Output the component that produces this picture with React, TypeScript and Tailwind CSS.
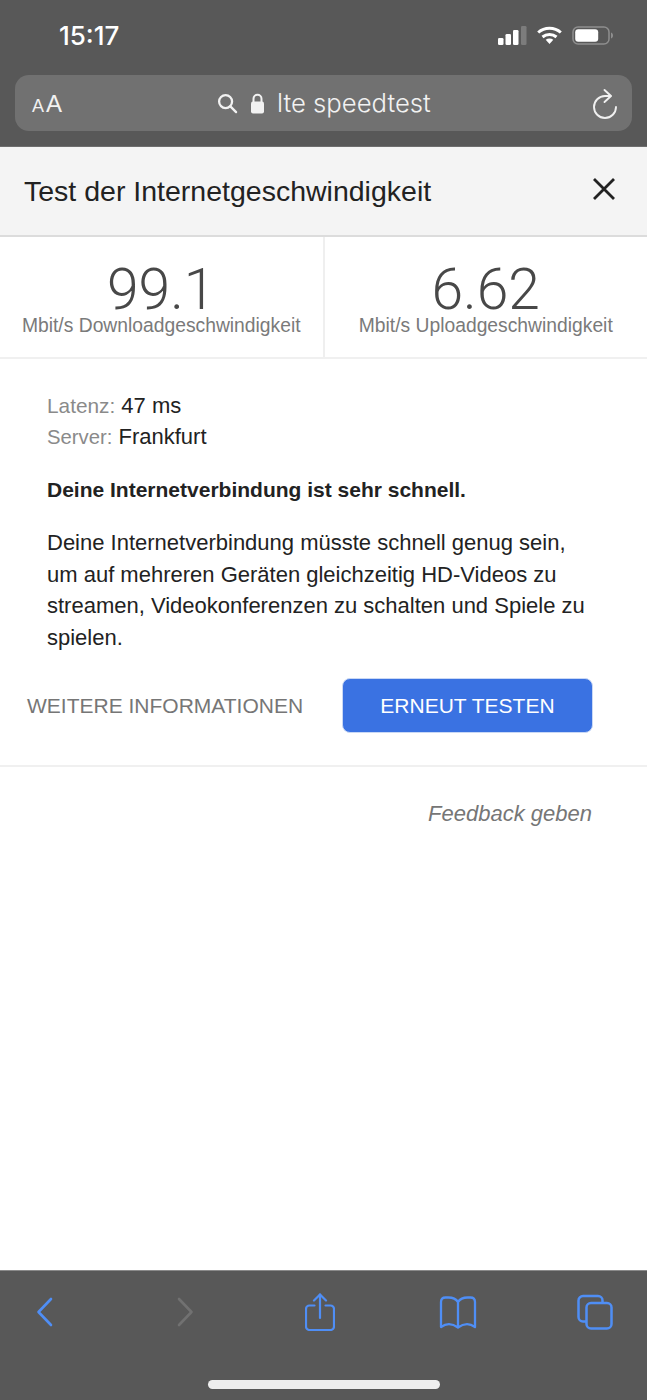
const blue = "#4f8ef5";

function Signal() {
  return (
    <svg width="29" height="19" viewBox="0 0 29 19">
      <rect x="0" y="12" width="5.500" height="7" rx="1.300" fill="#fff" />
      <rect x="7.500" y="8" width="5.500" height="11" rx="1.300" fill="#fff" />
      <rect x="15" y="4" width="5.500" height="15" rx="1.300" fill="#fff" />
      <rect x="23" y="0" width="5.500" height="19" rx="1.300" fill="#7c7c7c" />
    </svg>
  );
}

function Wifi() {
  return (
    <svg width="25" height="18" viewBox="0 0 25 18" fill="none" stroke="#fff" strokeWidth="3">
      <path d="M1.200 6.500C7.500 .8 17.500 .8 23.800 6.500" />
      <path d="M5.500 11c4-3.400 10-3.400 14 0" />
      <path d="M12.500 18l-3.800-4.200c2.200-1.700 5.400-1.700 7.600 0z" fill="#fff" stroke="none" />
    </svg>
  );
}

function Battery() {
  return (
    <svg width="42" height="19" viewBox="0 0 42 19">
      <rect x="1" y="1" width="36" height="17" rx="5" fill="none" stroke="#8e8e8e" strokeWidth="1.500" />
      <rect x="3.200" y="3.200" width="23" height="12.600" rx="3" fill="#fff" />
      <path d="M39 6.500c1.500.5 2 1.700 2 3s-.5 2.500-2 3z" fill="#8e8e8e" />
    </svg>
  );
}

function Search() {
  return (
    <svg width="21" height="21" viewBox="0 0 22 22" fill="none" stroke="#f2f2f2" strokeWidth="2.400" strokeLinecap="round">
      <circle cx="9" cy="9" r="6.800" />
      <path d="M14 14l6 6" />
    </svg>
  );
}

function Lock() {
  return (
    <svg width="15" height="21" viewBox="0 0 15 21">
      <path d="M3.500 9V5.800a4 4 0 0 1 8 0V9" fill="none" stroke="#f2f2f2" strokeWidth="2" />
      <rect x="1" y="8.500" width="13" height="12" rx="2" fill="#f2f2f2" />
    </svg>
  );
}

function Reload() {
  return (
    <svg width="26" height="35" viewBox="0 0 26 35" fill="none" stroke="#f0f0f0" strokeWidth="1.900" strokeLinecap="round" strokeLinejoin="round">
      <path d="M18.500 10H13A11 11 0 1 0 24 21" />
      <path d="M12.500 4l6.500 6-6.500 6" />
    </svg>
  );
}

function Back({ color }: { color: string }) {
  return (
    <svg width="18" height="30" viewBox="0 0 18 30" fill="none" stroke={color} strokeWidth="2.600" strokeLinecap="round" strokeLinejoin="round">
      <path d="M15 2L2.500 15 15 28" />
    </svg>
  );
}

function Forward({ color }: { color: string }) {
  return (
    <svg width="18" height="30" viewBox="0 0 18 30" fill="none" stroke={color} strokeWidth="2.600" strokeLinecap="round" strokeLinejoin="round">
      <path d="M3 2l12.500 13L3 28" />
    </svg>
  );
}

function Share() {
  return (
    <svg width="30" height="38" viewBox="0 0 30 38" fill="none" stroke={blue} strokeWidth="2.200" strokeLinecap="round" strokeLinejoin="round">
      <path d="M9.500 12.500H4.500a3.500 3.500 0 0 0-3.500 3.500V33.500a3.500 3.500 0 0 0 3.500 3.500h21a3.500 3.500 0 0 0 3.500-3.500V16a3.500 3.500 0 0 0-3.500-3.500h-5" />
      <path d="M15 25V1.500" />
      <path d="M9 7.500l6-6 6 6" />
    </svg>
  );
}

function Book() {
  return (
    <svg width="38" height="33" viewBox="0 0 38 33" fill="none" stroke={blue} strokeWidth="2.300" strokeLinecap="round" strokeLinejoin="round">
      <path d="M19 6C17 3 13 1.500 9.500 1.500H6.500C3.500 1.500 2 3 2 6V31C7.500 27 13.500 27.500 19 31.500 24.500 27.500 30.500 27 36 31V6c0-3-1.500-4.500-4.500-4.500h-3C25 1.500 21 3 19 6zM19 6V30" />
    </svg>
  );
}

function Tabs() {
  return (
    <svg width="36" height="36" viewBox="0 0 36 36" fill="none" stroke={blue} strokeWidth="2.500">
      <path d="M9 27.500H6a4.500 4.500 0 0 1-4.500-4.500V6.500A4.500 4.500 0 0 1 6 2h15a4.500 4.500 0 0 1 4.500 4.500V9" />
      <rect x="9.500" y="9" width="25" height="25.500" rx="4.500" />
    </svg>
  );
}

function Stat({ value, label, border }: { value: string; label: string; border?: boolean }) {
  return (
    <div className={`flex-1 flex flex-col items-center pt-[25px] ${border ? "border-r-2 border-[#efefef]" : ""}`}>
      <div className="font-['Roboto',sans-serif] font-light text-[57px] leading-[55px] text-[#484848]">{value}</div>
      <div className="text-[19.300px] leading-[18px] text-[#7a7a7a]">{label}</div>
    </div>
  );
}

export default function App() {
  return (
    <div className="w-[647px] h-[1400px] flex flex-col bg-white overflow-hidden font-['Liberation_Sans',Arial,sans-serif]">
      <div className="h-[147px] shrink-0 bg-[#585858] flex flex-col border-b border-[#6e6e6e]">
        <div className="h-[75px] flex items-center justify-between pl-[59px] pr-[33px] pb-[5px]">
          <span className="font-['Inter',sans-serif] text-[26px] font-medium text-white">15:17</span>
          <div className="flex items-center gap-[10px]">
            <Signal />
            <Wifi />
            <Battery />
          </div>
        </div>
        <div className="mx-[15px] h-[56px] rounded-[14px] bg-[#717171] flex items-center pl-[17px] pr-[14px] text-[#f2f2f2]">
          <div className="flex items-baseline gap-[2px] w-[185px] pt-[2px]">
            <span className="text-[18px]">A</span>
            <span className="text-[24px]">A</span>
          </div>
          <Search />
          <span className="ml-[12px]"><Lock /></span>
          <span className="ml-[12px] pt-[1px] text-[25.700px] font-['Inter',sans-serif] font-light flex-1">lte speedtest</span>
          <Reload />
        </div>
      </div>

      <div className="h-[88px] shrink-0 bg-[#f4f4f4] flex items-center justify-between pl-[24px] pr-[31px]">
        <h1 className="text-[28.500px] text-[#222]">Test der Internetgeschwindigkeit</h1>
        <svg width="24" height="24" viewBox="0 0 24 24" stroke="#222" strokeWidth="2.800" className="mb-[4px]">
          <path d="M2 2l20 20M22 2L2 22" />
        </svg>
      </div>

      <div className="h-[124px] shrink-0 flex border-t-2 border-b-2 border-t-[#dcdcdc] border-b-[#f0f0f0]">
        <Stat value="99.1" label="Mbit/s Downloadgeschwindigkeit" border />
        <Stat value="6.62" label="Mbit/s Uploadgeschwindigkeit" />
      </div>

      <div className="pl-[47px] pr-[50px] pt-[31px]">
        <div className="text-[22px] leading-[31px] text-[#222]">
          <div><span className="text-[#8a8a8a] text-[20.800px]">Latenz:</span> 47 ms</div>
          <div><span className="text-[#8a8a8a] text-[20.300px]">Server:</span> Frankfurt</div>
        </div>
        <p className="mt-[21px] text-[21px] leading-[31px] font-bold text-[#222]">Deine Internetverbindung ist sehr schnell.</p>
        <p className="mt-[22px] text-[22px] leading-[31.500px] text-[#222]">
          Deine Internetverbindung müsste schnell genug sein, um auf mehreren Geräten gleichzeitig HD-Videos zu streamen, Videokonferenzen zu schalten und Spiele zu spielen.
        </p>
      </div>

      <div className="flex items-center pl-[27px] mt-[25px]">
        <span className="text-[21px] text-[#767676] w-[315px]">WEITERE INFORMATIONEN</span>
        <button className="w-[251px] h-[55px] rounded-[8px] bg-[#3a72e2] border border-[#c9d8f5] text-[21px] text-white">ERNEUT TESTEN</button>
      </div>

      <div className="mt-[32px] border-t-2 border-[#f0f0f0] pt-[30px] pr-[55px] text-right italic text-[22px] text-[#767676]">
        Feedback geben
      </div>

      <div className="flex-1" />

      <div className="h-[130px] shrink-0 bg-[#585858] border-t border-[#8a8a8a] flex flex-col">
        <div className="flex items-center justify-between h-[82px] pl-[25px] pr-[32px]">
          <div className="w-[40px] flex justify-center"><Back color={blue} /></div>
          <div className="w-[40px] flex justify-center pl-[5px]"><Forward color="#717171" /></div>
          <div className="w-[40px] flex justify-center"><Share /></div>
          <div className="w-[40px] flex justify-center"><Book /></div>
          <div className="w-[40px] flex justify-center"><Tabs /></div>
        </div>
        <div className="flex justify-center mt-[27px]">
          <div className="w-[232px] h-[9px] rounded-full bg-[#eeeeee]" />
        </div>
      </div>
    </div>
  );
}
